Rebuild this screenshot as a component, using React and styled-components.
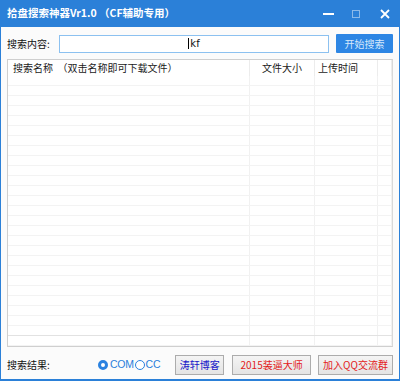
import React from "react";
import styled, { createGlobalStyle } from "styled-components";

const Global = createGlobalStyle`
  html, body { margin: 0; padding: 0; background: #fff; }
  * { box-sizing: border-box; }
`;

const FONT = `"Noto Sans CJK SC", "Noto Sans", sans-serif`;
const BLUE = "#2b80d8";

const Window = styled.div`
  width: 400px;
  height: 381px;
  display: flex;
  flex-direction: column;
  background: #fbfbfb;
  border-left: 1px solid ${BLUE};
  border-right: 1px solid ${BLUE};
  border-bottom: 2px solid ${BLUE};
  font-family: ${FONT};
  font-size: 10px;
  color: #111;
`;

const TitleBar = styled.div`
  height: 27px;
  flex: none;
  margin: 0 -1px;
  background: ${BLUE};
  display: flex;
  align-items: center;
  padding-left: 7px;
`;

const Title = styled.div`
  color: #fff;
  font-weight: bold;
  font-size: 10.5px;
  flex: 1;
  line-height: 1;
  margin-top: -1px;
`;

const Controls = styled.div`
  display: flex;
  align-items: center;
  height: 100%;
`;

const Ctl = styled.div`
  width: ${(p) => p.$w}px;
  height: 100%;
  display: flex;
  align-items: center;
  justify-content: center;
  opacity: ${(p) => (p.$dim ? 0.45 : 1)};
`;

const Body = styled.div`
  flex: 1;
  display: flex;
  flex-direction: column;
  padding: 0 6px;
  min-height: 0;
`;

const SearchRow = styled.div`
  display: flex;
  align-items: center;
  height: 19px;
  margin-top: 7px;
`;

const Label = styled.div`
  width: ${(p) => p.$w}px;
  flex: none;
  font-size: 10px;
  line-height: 1;
  white-space: nowrap;
`;

const Input = styled.div`
  width: 270px;
  height: 18px;
  border: 1px solid #8cc1f0;
  background: #fff;
  display: flex;
  align-items: center;
  justify-content: center;
  font-family: "DejaVu Sans", sans-serif;
  font-size: 10px;
  color: #111;
`;

const Caret = styled.span`
  display: inline-block;
  width: 1px;
  height: 11px;
  background: #000;
  margin-right: 1px;
`;

const PrimaryButton = styled.div`
  width: 57px;
  height: 19px;
  margin-left: 7px;
  background: #2d86e4;
  color: #d6e8fb;
  display: flex;
  align-items: center;
  justify-content: center;
  font-size: 10px;
  border-radius: 1px;
`;

const Table = styled.div`
  margin-top: 6px;
  height: 288px;
  border: 1px solid #cfcfcf;
  border-right-color: #d8d8d8;
  background: #fff;
  display: flex;
  flex-direction: column;
  overflow: hidden;
`;

const HeadRow = styled.div`
  display: grid;
  grid-template-columns: 242px 65px 63px 1fr;
  height: 16px;
  flex: none;
  font-size: 10px;
  color: #1a1a1a;
`;

const HeadCell = styled.div`
  display: flex;
  align-items: center;
  padding-left: ${(p) => p.$pad}px;
  border-right: 1px solid #ececec;
  white-space: nowrap;
  line-height: 1;
`;

const Row = styled.div`
  display: grid;
  grid-template-columns: 242px 65px 63px 1fr;
  height: 10px;
  flex: none;
  border-bottom: 1px solid ${(p) => (p.$strong ? "#e2e2e2" : "#f3f3f3")};
`;

const Cell = styled.div`
  border-right: 1px solid #f1f1f1;
`;

const BottomBar = styled.div`
  flex: 1;
  display: flex;
  align-items: center;
  padding-top: 3px;
`;

const RadioGroup = styled.div`
  display: flex;
  align-items: center;
  margin-left: ${(p) => p.$ml}px;
  color: #2a7fdc;
  font-family: "Liberation Sans", sans-serif;
  font-size: 10.5px;
  line-height: 1;
`;

const RadioDot = styled.span`
  width: 10px;
  height: 10px;
  border-radius: 50%;
  flex: none;
  border: ${(p) => (p.$on ? "3px" : "1px")} solid #2a82e0;
  background: #fff;
  margin-right: ${(p) => (p.$on ? 2 : 1)}px;
`;

const RadioText = styled.span`
  margin-right: ${(p) => p.$mr}px;
  letter-spacing: -0.3px;
`;

const Btn = styled.div`
  width: ${(p) => p.$w}px;
  height: 20px;
  margin-left: ${(p) => p.$ml}px;
  border: 1px solid #acacac;
  background: linear-gradient(#f4f4f4, #e4e4e4);
  color: ${(p) => p.$color};
  display: flex;
  align-items: center;
  justify-content: center;
  font-size: 10px;
  white-space: nowrap;
  line-height: 1;
`;

const rows = Array.from({ length: 27 });

export default function App() {
  return (
    <>
      <Global />
      <Window>
        <TitleBar>
          <Title>拾盘搜索神器Vr1.0 （CF辅助专用）</Title>
          <Controls>
            <Ctl $w={28}>
              <svg width="11" height="4" viewBox="0 0 11 4">
                <rect x="0" y="1" width="11" height="2" fill="#fff" />
              </svg>
            </Ctl>
            <Ctl $w={28} $dim>
              <svg width="8" height="8" viewBox="0 0 8 8">
                <rect x="0.5" y="0.5" width="7" height="7" fill="none" stroke="#fff" />
              </svg>
            </Ctl>
            <Ctl $w={30}>
              <svg width="10" height="10" viewBox="0 0 10 10">
                <path d="M1 1 L9 9 M9 1 L1 9" stroke="#fff" strokeWidth="1.8" />
              </svg>
            </Ctl>
          </Controls>
        </TitleBar>
        <Body>
          <SearchRow>
            <Label $w={52}>搜索内容:</Label>
            <Input>
              <Caret />
              kf
            </Input>
            <PrimaryButton>开始搜索</PrimaryButton>
          </SearchRow>
          <Table>
            <HeadRow>
              <HeadCell $pad={5}>搜索名称&nbsp;&nbsp;（双击名称即可下载文件）</HeadCell>
              <HeadCell $pad={12}>文件大小</HeadCell>
              <HeadCell $pad={3}>上传时间</HeadCell>
              <HeadCell $pad={0} />
            </HeadRow>
            {rows.map((_, i) => (
              <Row key={i} $strong={i === 25}>
                <Cell />
                <Cell />
                <Cell />
                <Cell />
              </Row>
            ))}
          </Table>
          <BottomBar>
            <Label $w={45}>搜索结果:</Label>
            <RadioGroup $ml={46}>
              <RadioDot $on />
              <RadioText $mr={1}>COM</RadioText>
              <RadioDot />
              <RadioText $mr={0}>CC</RadioText>
            </RadioGroup>
            <Btn $w={49} $ml={15} $color="#1515c8">涛轩博客</Btn>
            <Btn $w={79} $ml={8} $color="#e31b1b">2015装逼大师</Btn>
            <Btn $w={75} $ml={7} $color="#e31b1b">加入QQ交流群</Btn>
          </BottomBar>
        </Body>
      </Window>
    </>
  );
}
